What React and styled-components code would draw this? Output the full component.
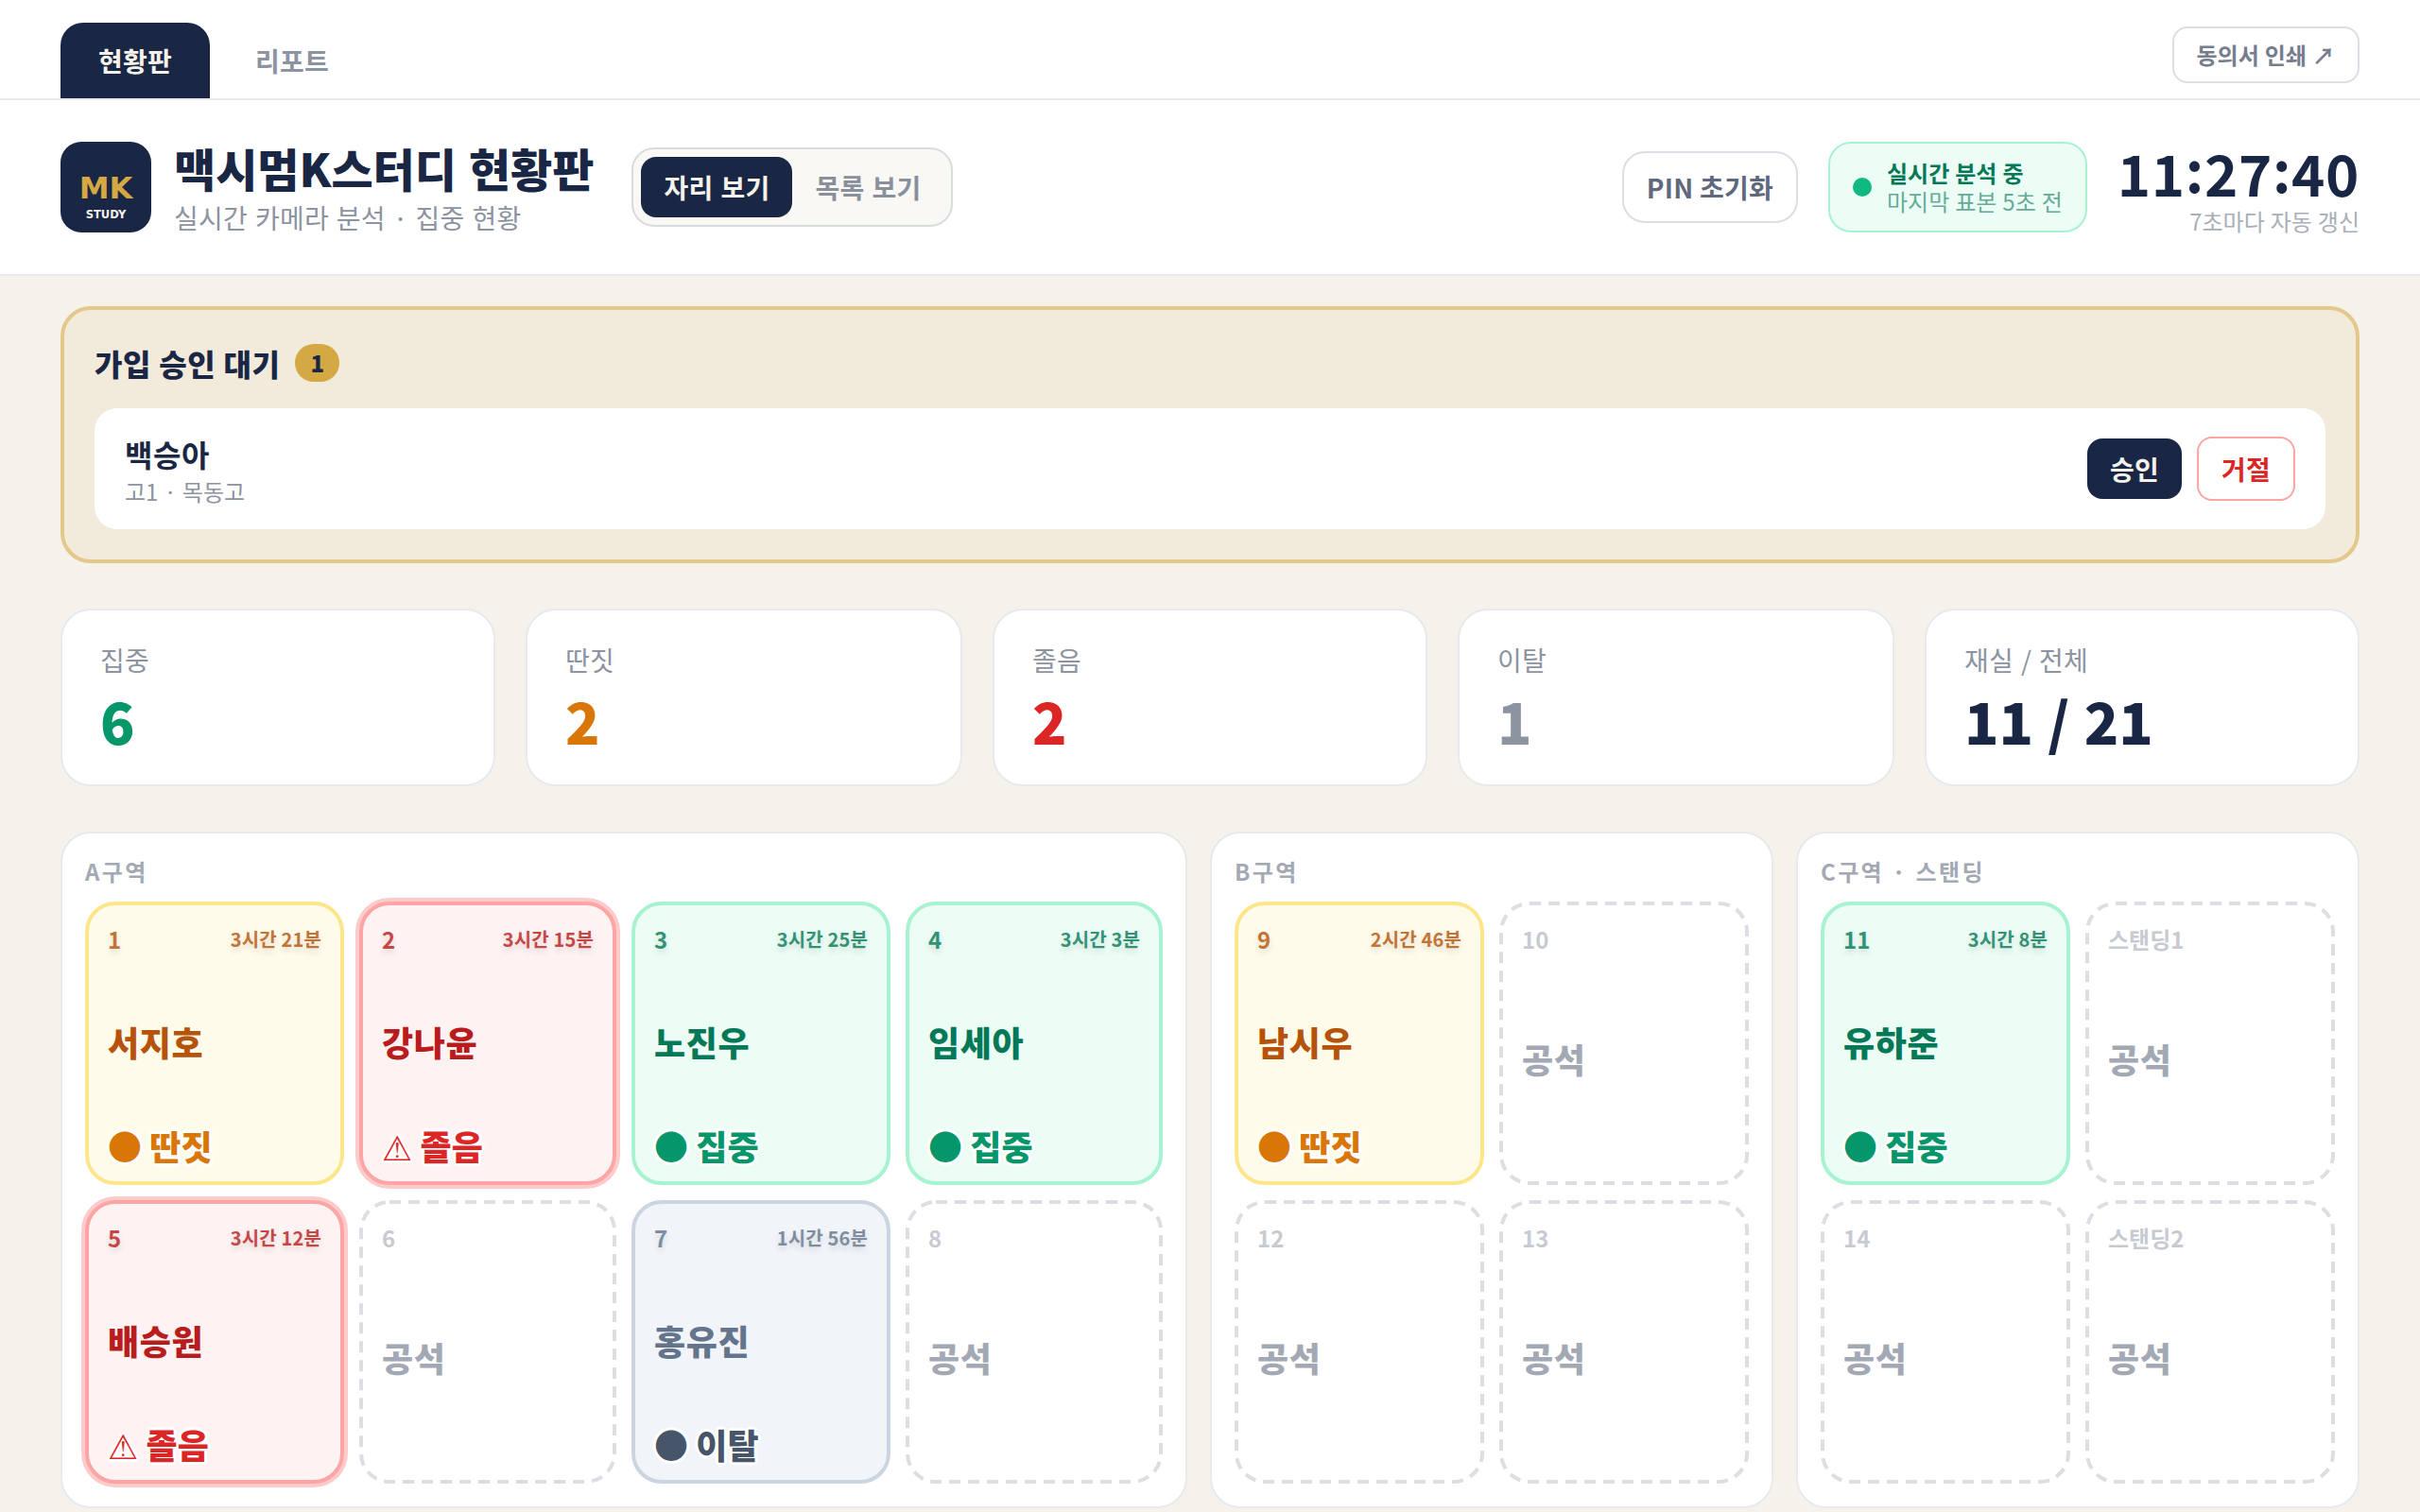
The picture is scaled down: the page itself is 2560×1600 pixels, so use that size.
import React from "react";
import styled, { createGlobalStyle, css } from "styled-components";

const NAVY = "#1a2744";
const CREAM = "#f5f2eb";
const GOLD = "#d4a843";

const GlobalStyle = createGlobalStyle`
	* {
		box-sizing: border-box;
	}
	body {
		margin: 0;
		background: ${CREAM};
		color: ${NAVY};
		font-family: "Noto Sans CJK KR", sans-serif;
		overflow: hidden;
	}
	button {
		font-family: inherit;
		border: none;
		background: none;
		cursor: pointer;
		white-space: nowrap;
	}
`;

/* type scale */
const textXs = css`
	font-size: 24px;
	line-height: 32px;
	word-spacing: 0.6px;
`;

const textSm = css`
	font-size: 28px;
	line-height: 40px;
	letter-spacing: 0.24px;
	word-spacing: 1.4px;
`;

const textBase = css`
	font-size: 32px;
	line-height: 48px;
	letter-spacing: 0.56px;
	word-spacing: 0.3px;
`;

const Page = styled.div`
	width: 100%;
	height: 1600px;
	overflow: hidden;
`;

const Nav = styled.nav`
	display: flex;
	align-items: center;
	justify-content: space-between;
	padding: 24px 64px 0;
	background: #fff;
	border-bottom: 2px solid #e8e9ec;
`;

const Tabs = styled.div`
	display: flex;
	gap: 8px;
`;

const Tab = styled.button`
	${textSm}
	padding: 20px 40px;
	border-radius: 24px 24px 0 0;
	font-weight: 700;
	background: ${(p) => (p.$active ? NAVY : "transparent")};
	color: ${(p) => (p.$active ? CREAM : "#8c93a1")};
`;

const PrintButton = styled.button`
	${textXs}
	margin-bottom: 12px;
	padding: 12px 24px;
	border: 2px solid #dddee3;
	border-radius: 16px;
	font-weight: 700;
	color: #767d8f;
`;

const Header = styled.header`
	height: 186px;
	padding: 0 64px;
	display: flex;
	align-items: center;
	justify-content: space-between;
	background: #fff;
	border-bottom: 2px solid #e8e9ec;
`;

const HeaderSide = styled.div`
	display: flex;
	align-items: center;
	gap: ${(p) => p.$gap}px;
`;

const Brand = styled.div`
	display: flex;
	align-items: center;
	gap: 24px;
`;

const Title = styled.h1`
	margin: 0 0 2px;
	font-size: 48px;
	line-height: 62px;
	font-weight: 900;
	word-spacing: 2px;
`;

const Subtitle = styled.p`
	${textSm}
	margin: 0;
	color: #8c93a1;
`;

const Toggle = styled.div`
	display: flex;
	padding: 8px;
	border: 2px solid #dadbdc;
	border-radius: 24px;
	background: #faf8f5;
`;

const ToggleItem = styled.button`
	${textSm}
	padding: 12px 24px;
	border-radius: 16px;
	font-weight: 700;
	background: ${(p) => (p.$active ? NAVY : "transparent")};
	color: ${(p) => (p.$active ? CREAM : "#8a8f9c")};
`;

const PinButton = styled.button`
	${textSm}
	padding: 16px 24px;
	border: 2px solid #dddee3;
	border-radius: 24px;
	font-weight: 700;
	word-spacing: 0;
	color: #5f687c;
`;

const Live = styled.div`
	${textXs}
	display: flex;
	align-items: center;
	gap: 16px;
	padding: 16px 24px;
	border: 2px solid #a7f3d0;
	border-radius: 24px;
	background: #ecfdf5;
	line-height: 30px;
	color: #65ac98;
	b {
		display: block;
		font-weight: 700;
		color: #047857;
	}
`;

const LiveDot = styled.span`
	width: 20px;
	height: 20px;
	border-radius: 50%;
	background: #10b981;
`;

const Clock = styled.div`
	text-align: right;
`;

const ClockTime = styled.div`
	font-size: 60px;
	line-height: 72px;
	height: 72px;
	font-weight: 700;
	letter-spacing: 0.6px;
	font-variant-numeric: tabular-nums;
`;

const Colon = styled.span`
	line-height: 1;
	vertical-align: 4px;
`;

const ClockNote = styled.div`
	${textXs}
	color: #a9aeb9;
`;

const Main = styled.main`
	padding: 32px 64px;
	display: flex;
	flex-direction: column;
	gap: 48px;
`;

const Pending = styled.section`
	padding: 32px;
	border: 4px solid #e3c88b;
	border-radius: 32px;
	background: #f2eadb;
`;

const PendingHead = styled.div`
	display: flex;
	align-items: center;
	gap: 16px;
	margin-bottom: 24px;
	h2 {
		${textBase}
		margin: 0;
		font-weight: 900;
	}
	span {
		${textXs}
		padding: 4px 16px;
		border-radius: 20px;
		font-weight: 900;
		background: ${GOLD};
	}
`;

const Applicant = styled.div`
	display: flex;
	align-items: center;
	justify-content: space-between;
	padding: 24px 32px;
	border-radius: 24px;
	background: #fff;
`;

const ApplicantName = styled.div`
	${textBase}
	font-weight: 700;
`;

const ApplicantMeta = styled.div`
	${textXs}
	color: #8c93a1;
`;

const Actions = styled.div`
	display: flex;
	align-items: center;
	gap: 16px;
`;

const ActionButton = styled.button`
	${textSm}
	padding: 12px 24px;
	border-radius: 16px;
	font-weight: 700;
	${(p) =>
		p.$reject
			? css`
					border: 2px solid #fca5a5;
					color: #dc2626;
			  `
			: css`
					background: ${NAVY};
					color: ${CREAM};
			  `}
`;

const Stats = styled.section`
	display: grid;
	grid-template-columns: 460fr 462fr 460fr 462fr 460fr;
	gap: 32px;
`;

const StatCard = styled.div`
	padding: 32px 40px;
	border: 2px solid #e8e9ec;
	border-radius: 32px;
	background: #fff;
`;

const StatLabel = styled.div`
	${textSm}
	color: #8c93a1;
`;

const StatValue = styled.div`
	margin-top: 8px;
	font-size: 60px;
	line-height: 72px;
	font-weight: 900;
	word-spacing: 1.5px;
	color: ${(p) => p.$color};
`;

const Zones = styled.section`
	display: grid;
	grid-template-columns: 1192fr 596fr 596fr;
	gap: 24px;
`;

const Zone = styled.div`
	padding: 24px;
	border: 2px solid #e8e9ec;
	border-radius: 32px;
	background: #fff;
`;

const ZoneLabel = styled.div`
	${textXs}
	margin-bottom: 16px;
	font-weight: 700;
	letter-spacing: 2.4px;
	color: #a3a9b4;
`;

const SeatGrid = styled.div`
	display: grid;
	grid-template-columns: ${(p) => p.$cols};
	grid-auto-rows: 300px;
	gap: 16px;
`;

const Seat = styled.div`
	position: relative;
	display: flex;
	flex-direction: column;
	padding: 20px;
	border: 4px solid ${(p) => p.$tone.border};
	border-radius: 32px;
	background: ${(p) => p.$tone.bg};
	color: ${(p) => p.$tone.text};
	box-shadow: ${(p) => (p.$tone.ring ? `0 0 0 4px ${p.$tone.ring}` : "none")};
`;

const DashedFrame = styled.svg`
	position: absolute;
	top: -4px;
	left: -4px;
	width: calc(100% + 8px);
	height: calc(100% + 8px);
	rect {
		width: calc(100% - 4px);
		height: calc(100% - 4px);
		fill: none;
		stroke: #dddee3;
		stroke-width: 4px;
		stroke-dasharray: 12 8;
	}
`;

const SeatTop = styled.div`
	display: flex;
	align-items: center;
	justify-content: space-between;
	font-size: 24px;
	line-height: 32px;
	font-weight: 700;
	opacity: ${(p) => (p.$empty ? 0.6 : 0.8)};
	text-shadow: ${(p) => (p.$empty ? "none" : "0 4px 6px rgba(0, 0, 0, 0.14)")};
	time {
		font-size: 20px;
		letter-spacing: 0.16px;
	}
`;

const SeatName = styled.div`
	flex: 1;
	display: flex;
	align-items: center;
	font-size: 36px;
	line-height: 45px;
	font-weight: 900;
	letter-spacing: 0.6px;
`;

const SeatStatus = styled.div`
	height: 36px;
	font-size: 36px;
	line-height: 36px;
	font-weight: 900;
	white-space: nowrap;
	color: ${(p) => p.$color};
	text-shadow:
		2px 2px 1px #fff,
		-2px 2px 1px #fff,
		2px -2px 1px #fff,
		-2px -2px 1px #fff,
		3px 0 1px #fff,
		-3px 0 1px #fff,
		0 3px 1px #fff,
		0 -3px 1px #fff;
`;

const Warning = styled.span`
	font-family: "DejaVu Sans", sans-serif;
`;

const TONES = {
	focus: { label: "집중", bg: "#ecfdf5", border: "#a7f3d0", text: "#047857", status: "#059669" },
	distract: { label: "딴짓", bg: "#fffbeb", border: "#fde68a", text: "#b45309", status: "#d97706" },
	sleepy: {
		label: "졸음",
		warn: true,
		bg: "#fef2f2",
		border: "#fca5a5",
		ring: "#fecaca",
		text: "#b91c1c",
		status: "#dc2626",
	},
	away: { label: "이탈", bg: "#f1f5f9", border: "#cbd5e1", text: "#64748b", status: "#475569" },
	empty: { bg: "#fff", border: "transparent", text: "#a3a9b4" },
};

const STATS = [
	{ label: "집중", value: "6", color: "#059669" },
	{ label: "딴짓", value: "2", color: "#d97706" },
	{ label: "졸음", value: "2", color: "#dc2626" },
	{ label: "이탈", value: "1", color: "#8c93a1" },
	{ label: "재실 / 전체", value: "11 / 21", color: NAVY },
];

const ZONES = [
	{
		name: "A구역",
		cols: "274fr 272fr 274fr 272fr",
		seats: [
			{ no: "1", name: "서지호", time: "3시간 21분", state: "distract" },
			{ no: "2", name: "강나윤", time: "3시간 15분", state: "sleepy" },
			{ no: "3", name: "노진우", time: "3시간 25분", state: "focus" },
			{ no: "4", name: "임세아", time: "3시간 3분", state: "focus" },
			{ no: "5", name: "배승원", time: "3시간 12분", state: "sleepy" },
			{ no: "6" },
			{ no: "7", name: "홍유진", time: "1시간 56분", state: "away" },
			{ no: "8" },
		],
	},
	{
		name: "B구역",
		cols: "1fr 1fr",
		seats: [
			{ no: "9", name: "남시우", time: "2시간 46분", state: "distract" },
			{ no: "10" },
			{ no: "12" },
			{ no: "13" },
		],
	},
	{
		name: "C구역 · 스탠딩",
		cols: "1fr 1fr",
		seats: [
			{ no: "11", name: "유하준", time: "3시간 8분", state: "focus" },
			{ no: "스탠딩1" },
			{ no: "14" },
			{ no: "스탠딩2" },
		],
	},
];

const Logo = () => (
	<svg width="96" height="96" viewBox="0 0 96 96">
		<rect width="96" height="96" rx="22" fill={NAVY} />
		<text x="48" y="60" textAnchor="middle" fontFamily="DejaVu Sans" fontWeight="700" fontSize="32" fill={GOLD}>
			MK
		</text>
		<text x="48" y="81" textAnchor="middle" fontFamily="DejaVu Sans" fontWeight="700" fontSize="11.5" fill={CREAM}>
			STUDY
		</text>
	</svg>
);

const SeatCard = ({ seat }) => {
	const empty = !seat.state;
	const tone = TONES[seat.state || "empty"];
	return (
		<Seat $tone={tone}>
			{empty && (
				<DashedFrame>
					<rect x="2" y="2" rx="30" />
				</DashedFrame>
			)}
			<SeatTop $empty={empty}>
				<span>{seat.no}</span>
				{seat.time && <time>{seat.time}</time>}
			</SeatTop>
			<SeatName>{seat.name || "공석"}</SeatName>
			{!empty && (
				<SeatStatus $color={tone.status}>
					{tone.warn ? <Warning>⚠</Warning> : "●"} {tone.label}
				</SeatStatus>
			)}
		</Seat>
	);
};

const App = () => {
	return (
		<Page>
			<GlobalStyle />
			<Nav>
				<Tabs>
					<Tab $active>현황판</Tab>
					<Tab>리포트</Tab>
				</Tabs>
				<PrintButton>동의서 인쇄 ↗</PrintButton>
			</Nav>
			<Header>
				<HeaderSide $gap={40}>
					<Brand>
						<Logo />
						<div>
							<Title>맥시멈K스터디 현황판</Title>
							<Subtitle>실시간 카메라 분석 · 집중 현황</Subtitle>
						</div>
					</Brand>
					<Toggle>
						<ToggleItem $active>자리 보기</ToggleItem>
						<ToggleItem>목록 보기</ToggleItem>
					</Toggle>
				</HeaderSide>
				<HeaderSide $gap={32}>
					<PinButton>PIN 초기화</PinButton>
					<Live>
						<LiveDot />
						<div>
							<b>실시간 분석 중</b>
							마지막 표본 5초 전
						</div>
					</Live>
					<Clock>
						<ClockTime>
							11<Colon>:</Colon>27<Colon>:</Colon>40
						</ClockTime>
						<ClockNote>7초마다 자동 갱신</ClockNote>
					</Clock>
				</HeaderSide>
			</Header>
			<Main>
				<Pending>
					<PendingHead>
						<h2>가입 승인 대기</h2>
						<span>1</span>
					</PendingHead>
					<Applicant>
						<div>
							<ApplicantName>백승아</ApplicantName>
							<ApplicantMeta>고1 · 목동고</ApplicantMeta>
						</div>
						<Actions>
							<ActionButton>승인</ActionButton>
							<ActionButton $reject>거절</ActionButton>
						</Actions>
					</Applicant>
				</Pending>
				<Stats>
					{STATS.map((stat) => (
						<StatCard key={stat.label}>
							<StatLabel>{stat.label}</StatLabel>
							<StatValue $color={stat.color}>{stat.value}</StatValue>
						</StatCard>
					))}
				</Stats>
				<Zones>
					{ZONES.map((zone) => (
						<Zone key={zone.name}>
							<ZoneLabel>{zone.name}</ZoneLabel>
							<SeatGrid $cols={zone.cols}>
								{zone.seats.map((seat) => (
									<SeatCard key={seat.no} seat={seat} />
								))}
							</SeatGrid>
						</Zone>
					))}
				</Zones>
			</Main>
		</Page>
	);
};

export default App;
